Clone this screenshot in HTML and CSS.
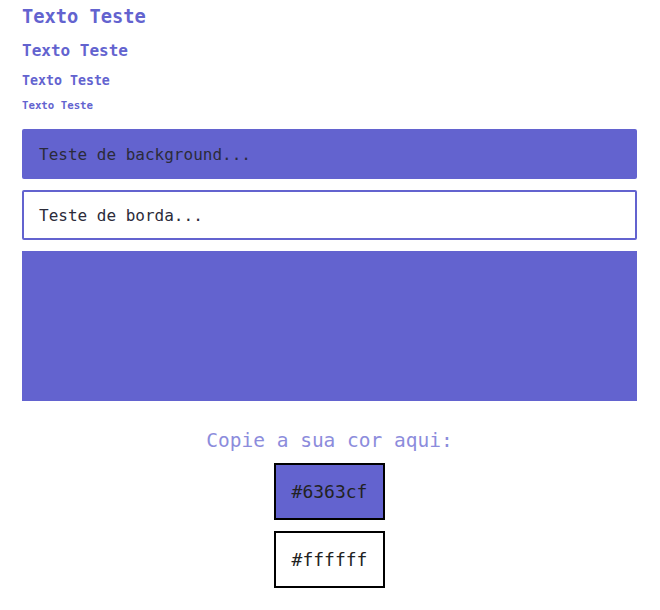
FILE: index.html
```html
<!DOCTYPE html>
<html lang="pt">
<head>
<meta charset="utf-8">
<title>Teste de cor</title>
<link rel="stylesheet" href="styles.css">
</head>
<body>
<main class="page">
  <h3 class="t t1">Texto Teste</h3>
  <h4 class="t t2">Texto Teste</h4>
  <h5 class="t t3">Texto Teste</h5>
  <h6 class="t t4">Texto Teste</h6>
  <div class="box box-bg">Teste de background...</div>
  <div class="box box-border">Teste de borda...</div>
  <div class="block"></div>
  <section class="picker">
    <p class="picker-title">Copie a sua cor aqui:</p>
    <div class="swatch swatch-primary">#6363cf</div>
    <div class="swatch swatch-white">#ffffff</div>
  </section>
</main>
</body>
</html>
```
FILE: styles.css
```css
* { box-sizing: border-box; }
body {
  margin: 0;
  background: #fff;
  font-family: "DejaVu Sans Mono", "Liberation Mono", monospace;
}
.page {
  width: 615px;
  margin-left: 22px;
  padding-top: 6px;
  display: flex;
  flex-direction: column;
}
.t {
  margin: 0;
  color: #6363cf;
  font-weight: bold;
}
.t1 { font-size: 18.72px; line-height: 22px; }
.t2 { font-size: 16px; line-height: 20px; margin-top: 13px; }
.t3 { font-size: 13.28px; line-height: 16px; margin-top: 12px; }
.t4 { font-size: 10.72px; line-height: 13px; margin-top: 10px; }
.box {
  height: 50px;
  border-radius: 2px;
  padding-left: 17px;
  display: flex;
  align-items: center;
  font-size: 16px;
  color: #2b2b3a;
}
.box-bg {
  margin-top: 17px;
  background: #6363cf;
}
.box-border {
  margin-top: 11px;
  border: 2px solid #6363cf;
  padding-left: 15px;
}
.block {
  margin-top: 11px;
  height: 150px;
  background: #6363cf;
}
.picker {
  display: flex;
  flex-direction: column;
  align-items: center;
  margin-top: 28px;
}
.picker-title {
  margin: 0;
  font-size: 19.5px;
  line-height: 24px;
  color: #8c8cdc;
}
.swatch {
  width: 111px;
  height: 57px;
  border: 2px solid #000;
  display: flex;
  align-items: center;
  justify-content: center;
  font-size: 18px;
  color: #222;
}
.swatch-primary {
  margin-top: 10px;
  background: #6363cf;
}
.swatch-white {
  margin-top: 11px;
  background: #fff;
}
```
